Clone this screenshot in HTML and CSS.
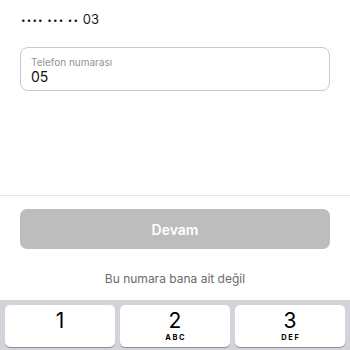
FILE: index.html
```html
<!DOCTYPE html>
<html lang="tr">
<head>
<meta charset="utf-8">
<link rel="stylesheet" href="styles.css">
</head>
<body>
<div class="page">
  <div class="masked"><span class="dots">•••• ••• ••</span> 03</div>
  <div class="field">
    <div class="field-label">Telefon numarası</div>
    <div class="field-value">05</div>
  </div>
  <div class="sep"></div>
  <div class="btn">Devam</div>
  <div class="link">Bu numara bana ait değil</div>
  <div class="keyboard">
    <div class="key"><span class="digit">1</span></div>
    <div class="key"><span class="digit">2</span><span class="letters">ABC</span></div>
    <div class="key"><span class="digit">3</span><span class="letters">DEF</span></div>
  </div>
</div>
</body>
</html>
```
FILE: styles.css
```css
html, body {
  margin: 0;
  padding: 0;
  background: #ffffff;
}
body {
  font-family: Inter, "Liberation Sans", sans-serif;
  color: #111;
  overflow: hidden;
}
.page {
  width: 350px;
  height: 350px;
  display: flex;
  flex-direction: column;
}
.masked {
  padding: 11px 0 0 21px;
  font-size: 13px;
  line-height: 16px;
  height: 16px;
  color: #1a1a1a;
}
.dots {
  font-size: 8px;
  line-height: 8px;
  letter-spacing: 1.2px;
  vertical-align: 1px;
}
.field {
  margin: 20px 20px 0 20px;
  height: 44px;
  box-sizing: border-box;
  border: 1px solid #c9c9c9;
  border-radius: 8px;
  padding: 8px 0 0 10px;
}
.field-label {
  font-size: 10px;
  line-height: 12px;
  color: #929292;
}
.field-value {
  font-size: 14px;
  line-height: 17px;
  color: #111;
}
.sep {
  margin-top: 104px;
  height: 1px;
  background: #e6e6e6;
}
.btn {
  margin: 13px 20px 0 20px;
  height: 40px;
  border-radius: 7px;
  background: #bdbdbd;
  color: #ffffff;
  font-weight: 600;
  font-size: 14px;
  display: flex;
  align-items: center;
  justify-content: center;
}
.link {
  margin-top: 22px;
  font-size: 12px;
  line-height: 16px;
  text-align: center;
  color: #6b6b6b;
}
.keyboard {
  margin-top: 13px;
  flex: 1;
  background: #d2d4da;
  display: grid;
  grid-template-columns: repeat(3, 1fr);
  column-gap: 5px;
  padding: 5px 5px 0 5px;
  align-items: start;
}
.key {
  height: 42px;
  background: #ffffff;
  border-radius: 5px;
  box-shadow: 0 1px 0 #8c8d91;
  display: flex;
  flex-direction: column;
  align-items: center;
  padding-top: 3px;
  box-sizing: border-box;
}
.digit {
  font-size: 21px;
  line-height: 25px;
  color: #000;
}
.letters {
  font-size: 7.5px;
  line-height: 9px;
  font-weight: 700;
  letter-spacing: 1.6px;
  margin-left: 1.6px;
  color: #000;
}
```
